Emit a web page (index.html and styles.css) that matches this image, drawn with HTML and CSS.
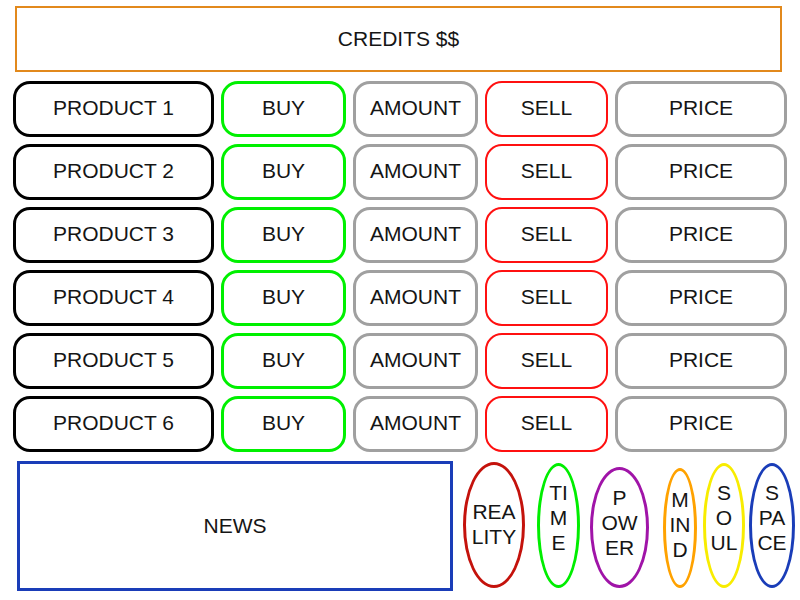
FILE: index.html
```html
<!DOCTYPE html>
<html>
<head>
<meta charset="utf-8">
<link rel="stylesheet" href="styles.css">
</head>
<body>
<div class="page">
  <div class="credits">CREDITS $$</div>
  <div class="market">
    <div class="cell product">PRODUCT 1</div><div class="cell buy">BUY</div><div class="cell amount">AMOUNT</div><div class="cell sell">SELL</div><div class="cell price">PRICE</div>
    <div class="cell product">PRODUCT 2</div><div class="cell buy">BUY</div><div class="cell amount">AMOUNT</div><div class="cell sell">SELL</div><div class="cell price">PRICE</div>
    <div class="cell product">PRODUCT 3</div><div class="cell buy">BUY</div><div class="cell amount">AMOUNT</div><div class="cell sell">SELL</div><div class="cell price">PRICE</div>
    <div class="cell product">PRODUCT 4</div><div class="cell buy">BUY</div><div class="cell amount">AMOUNT</div><div class="cell sell">SELL</div><div class="cell price">PRICE</div>
    <div class="cell product">PRODUCT 5</div><div class="cell buy">BUY</div><div class="cell amount">AMOUNT</div><div class="cell sell">SELL</div><div class="cell price">PRICE</div>
    <div class="cell product">PRODUCT 6</div><div class="cell buy">BUY</div><div class="cell amount">AMOUNT</div><div class="cell sell">SELL</div><div class="cell price">PRICE</div>
  </div>
  <div class="bottom">
    <div class="news">NEWS</div>
    <div class="gems">
      <div class="gem reality"><span>REA<br>LITY</span></div>
      <div class="gem time"><span>TI<br>M<br>E</span></div>
      <div class="gem power"><span>P<br>OW<br>ER</span></div>
      <div class="gem mind"><span>M<br>IN<br>D</span></div>
      <div class="gem soul"><span>S<br>O<br>UL</span></div>
      <div class="gem space"><span>S<br>PA<br>CE</span></div>
    </div>
  </div>
</div>
</body>
</html>
```

FILE: styles.css
```css
html, body {
  margin: 0;
  padding: 0;
  background: #ffffff;
}

body {
  font-family: "Liberation Sans", Arial, sans-serif;
  color: #151515;
  font-size: 21px;
}

.page {
  width: 800px;
  height: 600px;
  box-sizing: border-box;
  padding-top: 6px;
  display: flex;
  flex-direction: column;
}

.credits {
  margin-left: 15px;
  width: 767px;
  height: 66px;
  box-sizing: border-box;
  border: 2px solid #e2891c;
  display: flex;
  align-items: center;
  justify-content: center;
  font-size: 21px;
}

.market {
  margin-top: 9px;
  margin-left: 13px;
  display: grid;
  grid-template-columns: 201px 125px 125px 123px 172px;
  grid-auto-rows: 56px;
  column-gap: 7px;
  row-gap: 7px;
}

.cell {
  box-sizing: border-box;
  border: 3px solid #000;
  border-radius: 17px;
  display: flex;
  align-items: center;
  justify-content: center;
  padding-bottom: 2px;
}

.product { border-color: #000000; }
.buy { border-color: #00f000; }
.amount { border-color: #a0a0a0; }
.sell { border-color: #ff1010; border-width: 2px; }
.price { border-color: #a0a0a0; }

.bottom {
  margin-top: 9px;
  display: flex;
  align-items: flex-start;
}

.news {
  margin-left: 17px;
  width: 436px;
  height: 130px;
  box-sizing: border-box;
  border: 3px solid #1a3db8;
  display: flex;
  align-items: center;
  justify-content: center;
  font-size: 21px;
}

.gems {
  display: flex;
  align-items: flex-end;
  height: 127px;
  font-size: 21px;
  line-height: 25px;
}

.gem {
  box-sizing: border-box;
  border: 3px solid #000;
  border-radius: 50%;
  display: flex;
  align-items: center;
  justify-content: center;
  text-align: center;
  padding-bottom: 16px;
}

.reality {
  margin-left: 10px;
  width: 62px;
  height: 126px;
  border-color: #c4120c;
  padding-bottom: 2px;
}

.time {
  margin-left: 12px;
  width: 43px;
  height: 125px;
  border-color: #00ee00;
}

.power {
  margin-left: 10px;
  width: 59px;
  height: 121px;
  border-color: #a014a8;
  padding-bottom: 10px;
}

.mind {
  margin-left: 14px;
  width: 34px;
  height: 120px;
  border-color: #ffa200;
  padding-bottom: 8px;
}

.soul {
  margin-left: 6px;
  width: 42px;
  height: 125px;
  border-color: #f8ec00;
}

.space {
  margin-left: 4px;
  width: 46px;
  height: 125px;
  border-color: #1a3db8;
}
```
